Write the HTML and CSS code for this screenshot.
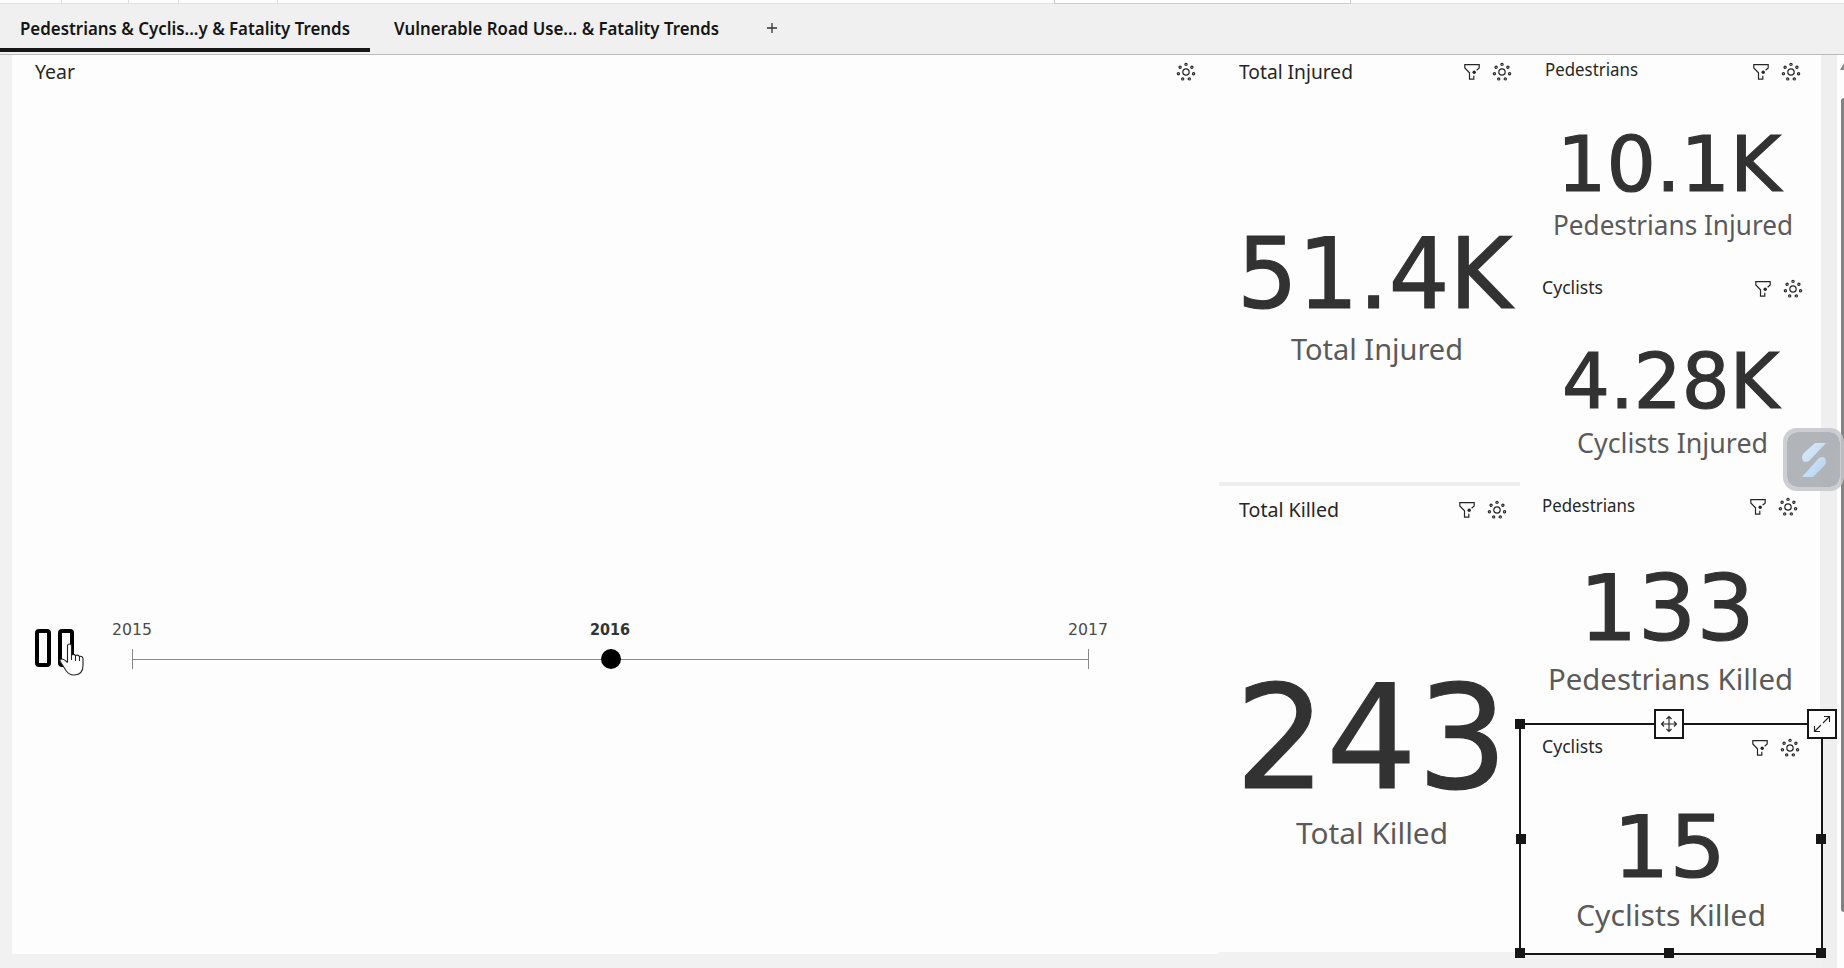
FILE: index.html
```html
<!DOCTYPE html>
<html lang="en">
<head>
<meta charset="utf-8">
<title>Road Trends</title>
<link rel="stylesheet" href="styles.css">
</head>
<body>
<svg class="defs" aria-hidden="true">
  <symbol id="filter" viewBox="0 0 16 16"><path d="M12.6 6.2 15.2 4V.7H.8V4l4.7 4.8v6.4h4.3v-3.4" fill="none" stroke="currentColor" stroke-width="1.2"/><circle cx="10.2" cy="8.3" r="1.7" fill="currentColor"/></symbol>
  <symbol id="gear" viewBox="-10 -10 20 20"><g fill="none" stroke="currentColor" stroke-width="1.2"><circle r="3.2"/><circle cy="-7.6" r="1.1"/><circle cx="5.9" cy="-4.7" r="1.1"/><circle cx="7.6" cy="1.7" r="1.1"/><circle cx="3.3" cy="6.9" r="1.1"/><circle cx="-3.3" cy="6.9" r="1.1"/><circle cx="-7.6" cy="1.7" r="1.1"/><circle cx="-5.9" cy="-4.7" r="1.1"/></g></symbol>
</svg>

<div class="toolbar"><i class="w61"></i><i class="w67"></i><i class="w50"></i><i class="w99"></i><i class="search"></i></div>

<nav class="tabs">
  <div class="tab active"><svg width="330" height="13"><text y="13" textLength="330" lengthAdjust="spacingAndGlyphs">Pedestrians &amp; Cyclis...y &amp; Fatality Trends</text></svg></div>
  <div class="tab"><svg width="325" height="13"><text y="13" textLength="325" lengthAdjust="spacingAndGlyphs">Vulnerable Road Use... &amp; Fatality Trends</text></svg></div>
  <svg class="plus" width="12" height="12"><path d="M6 1v10M1 6h10"/></svg>
</nav>

<main class="canvas">
  <section class="year">
    <header class="head"><svg class="title lg" width="40" height="14"><text y="14" textLength="40" lengthAdjust="spacingAndGlyphs">Year</text></svg><span class="icons"><svg class="gear"><use href="#gear"/></svg></span></header>
    <div class="player">
      <div class="pause"><i></i><i></i>
        <svg class="hand" width="26" height="34" viewBox="0 0 26 34"><path d="M8.500 19.500V3q0-2 2-2t2 2v9q2-1.500 4 .5 2-1 4 .8 3-.5 3.500 2.200v7q0 9-8.500 9.500-5 .5-8.500-4.500L1.200 18.500q-.8-2.500 1.800-2.500 2 0 5.500 3.500M12.500 12v5M16.500 12.500V18M20.500 13.300V18" fill="#fff" stroke="#222" stroke-width="1.100"/></svg>
      </div>
      <div class="timeline">
        <div class="years">
          <svg width="39" height="12"><text y="12" textLength="40" lengthAdjust="spacingAndGlyphs">2015</text></svg>
          <svg class="now" width="39" height="12"><text y="12" textLength="40" lengthAdjust="spacingAndGlyphs">2016</text></svg>
          <svg width="39" height="12"><text y="12" textLength="40" lengthAdjust="spacingAndGlyphs">2017</text></svg>
        </div>
        <div class="track"><i></i></div>
      </div>
    </div>
  </section>

  <section class="totals">
    <article class="card t-injured">
      <header class="head"><svg class="title lg" width="114" height="14"><text y="14" textLength="114" lengthAdjust="spacingAndGlyphs">Total Injured</text></svg><span class="icons"><svg class="filter"><use href="#filter"/></svg><svg class="gear"><use href="#gear"/></svg></span></header>
      <svg class="num" width="268" height="72"><text y="72" x="-7" font-size="98.500" textLength="275" lengthAdjust="spacingAndGlyphs">51.4K</text></svg>
      <svg class="label l29" width="170" height="21"><text y="21" textLength="172" lengthAdjust="spacingAndGlyphs">Total Injured</text></svg>
    </article>
    <article class="card t-killed">
      <header class="head"><svg class="title lg" width="100" height="14"><text y="14" textLength="100" lengthAdjust="spacingAndGlyphs">Total Killed</text></svg><span class="icons"><svg class="filter"><use href="#filter"/></svg><svg class="gear"><use href="#gear"/></svg></span></header>
      <svg class="num" width="252" height="105"><text y="105" x="-10" font-size="144" textLength="273" lengthAdjust="spacingAndGlyphs">243</text></svg>
      <svg class="label l29" width="150" height="21"><text y="21" textLength="152" lengthAdjust="spacingAndGlyphs">Total Killed</text></svg>
    </article>
  </section>

  <section class="groups">
    <article class="card p-injured">
      <header class="head"><svg class="title" width="93" height="12"><text y="12" textLength="93" lengthAdjust="spacingAndGlyphs">Pedestrians</text></svg><span class="icons"><svg class="filter"><use href="#filter"/></svg><svg class="gear"><use href="#gear"/></svg></span></header>
      <svg class="num" width="216" height="56"><text y="56" x="-8" font-size="76" textLength="224" lengthAdjust="spacingAndGlyphs">10.1K</text></svg>
      <svg class="label" width="236" height="19"><text y="19" x="-2" textLength="240" lengthAdjust="spacingAndGlyphs">Pedestrians Injured</text></svg>
    </article>
    <article class="card c-injured">
      <header class="head"><svg class="title" width="61" height="12"><text y="12" textLength="61" lengthAdjust="spacingAndGlyphs">Cyclists</text></svg><span class="icons"><svg class="filter"><use href="#filter"/></svg><svg class="gear"><use href="#gear"/></svg></span></header>
      <svg class="num" width="213" height="56"><text y="56" x="-4" font-size="76" textLength="217" lengthAdjust="spacingAndGlyphs">4.28K</text></svg>
      <svg class="label" width="187" height="19"><text y="19" x="-2" textLength="191" lengthAdjust="spacingAndGlyphs">Cyclists Injured</text></svg>
    </article>
    <article class="card p-killed">
      <header class="head"><svg class="title" width="93" height="12"><text y="12" textLength="93" lengthAdjust="spacingAndGlyphs">Pedestrians</text></svg><span class="icons"><svg class="filter"><use href="#filter"/></svg><svg class="gear"><use href="#gear"/></svg></span></header>
      <svg class="num" width="159" height="66"><text y="66" x="-10" font-size="91" textLength="176" lengthAdjust="spacingAndGlyphs">133</text></svg>
      <svg class="label l29" width="241" height="21"><text y="21" x="-2" textLength="245" lengthAdjust="spacingAndGlyphs">Pedestrians Killed</text></svg>
    </article>
    <article class="card c-killed">
      <header class="head"><svg class="title" width="61" height="12"><text y="12" textLength="61" lengthAdjust="spacingAndGlyphs">Cyclists</text></svg><span class="icons"><svg class="filter"><use href="#filter"/></svg><svg class="gear"><use href="#gear"/></svg></span></header>
      <svg class="num" width="98" height="62"><text y="62" x="-9" font-size="85" textLength="113" lengthAdjust="spacingAndGlyphs">15</text></svg>
      <svg class="label l28" width="186" height="20"><text y="20" x="-2" textLength="190" lengthAdjust="spacingAndGlyphs">Cyclists Killed</text></svg>
      <i class="h tl"></i><i class="h ml"></i><i class="h mr"></i><i class="h bl"></i><i class="h bm"></i><i class="h br"></i>
      <span class="btn move"><svg width="20" height="20" viewBox="-10 -10 20 20"><path d="M0-7.500V7.500M-7.500 0H7.500M-2.500-5 0-7.500 2.500-5M-2.500 5 0 7.500 2.500 5M-5-2.500-7.500 0-5 2.500M5-2.500 7.500 0 5 2.500"/></svg></span>
      <span class="btn expand"><svg width="20" height="20" viewBox="-10 -10 20 20"><path d="M-7.500 7.500-1 1M1-1 7.500-7.500M2-7.500H7.500V-2M-7.500 2V7.500H-2"/></svg></span>
    </article>
  </section>
  <div class="gutter"></div>
  <div class="scroll"><i class="arrow"></i><i class="thumb"></i></div>
  <div class="widget"><svg width="26" height="36" viewBox="0 0 26 36"><defs><linearGradient id="ice" x1="0" y1="0" x2="1" y2="1"><stop offset="0" stop-color="#dcecf9"/><stop offset="1" stop-color="#b3d2f1"/></linearGradient></defs><path d="M14 1H25L8 19Q1 22 1 15 1 12 4 10ZM12 35H1L18 16Q25 13 25 20 25 23 22 25Z" fill="url(#ice)"/></svg></div>
</main>
</body>
</html>
```
FILE: styles.css
```css
* { box-sizing: border-box; }
body { margin: 0; width: 1844px; height: 968px; overflow: hidden; background: #f1f1f1; font-family: "Noto Sans", sans-serif; color: #222; }
svg { display: block; overflow: visible; flex: none; }
.defs { position: absolute; width: 0; height: 0; }
i { display: block; flex: none; }

.toolbar { display: flex; height: 4px; background: #fdfdfd; border-bottom: 1px solid #e2e2e2; }
.toolbar i { border-right: 1px solid #ddd; }
.w61 { width: 62px; } .w67 { width: 67px; } .w50 { width: 50px; } .w99 { width: 99px; }
.toolbar .search { width: 297px; height: 4px; margin-left: 776px; border: 1px solid #ccc; border-top: 0; }

.tabs { display: flex; height: 51px; border-bottom: 1px solid #bbb; background: #f0f0f0; }
.tab { height: 48px; padding: 18px 21px 0 20px; }
.tab + .tab { padding-left: 24px; }
.tab text { font-size: 18px; font-weight: 600; fill: #161616; }
.active { width: 370px; border-bottom: 4px solid #161616; }
.plus { margin: 18px 0 0 26px; }
.plus path { stroke: #333; stroke-width: 1.3; }

.canvas { position: relative; display: grid; grid-template-columns: 1207px 301px 301px 16px 4px 3px; height: 913px; padding-left: 12px; }
.year { height: 899px; padding: 7px 23px 0; background: #fdfdfd; }
.head { display: flex; justify-content: space-between; align-items: center; height: 20px; color: #262626; }
.title text { font-size: 17.300px; fill: #262626; }
.title.lg text { font-size: 19.500px; }
.icons { display: flex; align-items: center; gap: 12px; }
.filter { width: 16px; height: 16px; }
.gear { width: 20px; height: 20px; }

.player { display: flex; margin-top: 541px; }
.pause { position: relative; display: flex; gap: 7px; padding-top: 6px; }
.pause i { width: 16px; height: 38px; border: 4px solid #000; border-radius: 4px; }
.hand { position: absolute; left: 24px; top: 20px; }
.timeline { width: 995px; margin-left: 38px; }
.years { display: flex; justify-content: space-between; }
.years text { font: 16.500px "DejaVu Sans", sans-serif; fill: #4a4a4a; }
.years .now text { font-weight: 700; fill: #333; }
.track { display: flex; justify-content: center; width: 957px; height: 20px; margin: 14px 0 0 20px; border: solid #888; border-width: 0 1px; background: linear-gradient(#888, #888) 0 10px / 100% 1px no-repeat; }
.track i { width: 20px; height: 20px; border-radius: 50%; background: #000; }

.card { display: flex; flex-direction: column; align-items: center; background: #fdfdfd; }
.card .head { width: 100%; }
.num text { font-family: "DejaVu Sans", sans-serif; fill: #323232; stroke: #323232; stroke-width: 1.200px; }
.label text { font-size: 26.600px; fill: #5a5a5a; }
.l29 text { font-size: 29px; }
.l28 text { font-size: 28.500px; }

.totals { display: grid; grid-template-rows: 427px 470px; height: 897px; }
.t-injured { padding: 7px 18px 0 20px; }
.t-injured .num { margin: 154px 0 31px 5px; }
.t-killed { padding: 14px 22px 0 20px; border-top: 4px solid #eee; border-right: 1px dashed #ddd; }
.t-killed .num { margin: 163px 0 35px -4px; }
.t-killed .label { margin-left: -4px; }

.groups { display: grid; grid-template-rows: 213px 214px 241px 232px; height: 900px; }
.p-injured { width: 303px; padding: 7px 22px 0 25px; }
.p-injured .title { margin-bottom: 4px; }
.p-injured .num { margin: 53px 0 25px; }
.p-injured .label { margin-left: -1px; }
.c-injured { padding: 11px 20px 0 22px; }
.c-injured .num { margin: 53px 0 26px; }
.c-killed .title, .c-injured .title, .p-killed .title { margin-bottom: 3px; }
.p-killed { padding: 15px 25px 0 22px; border-right: 3px solid #eee; margin-right: 0; }
.p-killed { padding-right: 22px; }
.p-killed .num { margin: 57px 0 29px -4px; }
.c-killed { position: relative; margin: 0 0 0 -1px; border: 2px solid #161616; padding: 13px 21px 0; }
.c-killed .num { margin: 57px 0 29px; }
.h { position: absolute; width: 10px; height: 10px; background: #161616; }
.tl { left: -6px; top: -6px; } .ml { left: -5px; top: 109px; } .mr { right: -5px; top: 109px; }
.bl { left: -6px; bottom: -5px; } .bm { left: 143px; bottom: -5px; } .br { right: -5px; bottom: -5px; }
.btn { position: absolute; display: grid; place-items: center; width: 30px; height: 30px; top: -16px; border: 2px solid #161616; background: #fdfdfd; }
.btn path { fill: none; stroke: #222; stroke-width: 1.100; }
.move { left: 133px; } .expand { right: -16px; }

.gutter { background: #efefef; }
.scroll { grid-column: 5 / 7; background: linear-gradient(#fdfdfd, #fdfdfd); }
.arrow { width: 4px; height: 7px; margin: 8px 0 28px 3px; background: #888; clip-path: polygon(0 100%, 100% 0, 100% 100%); }
.thumb { height: 814px; margin-left: 4px; border-radius: 5px 0 0 5px; background: #828282; }
.widget { position: absolute; left: 1783px; top: 373px; display: grid; place-items: center; width: 61px; height: 63px; border: 4px solid rgba(195, 198, 201, .85); border-radius: 14px; background: rgba(168, 173, 178, .9); background-clip: padding-box; }
```
